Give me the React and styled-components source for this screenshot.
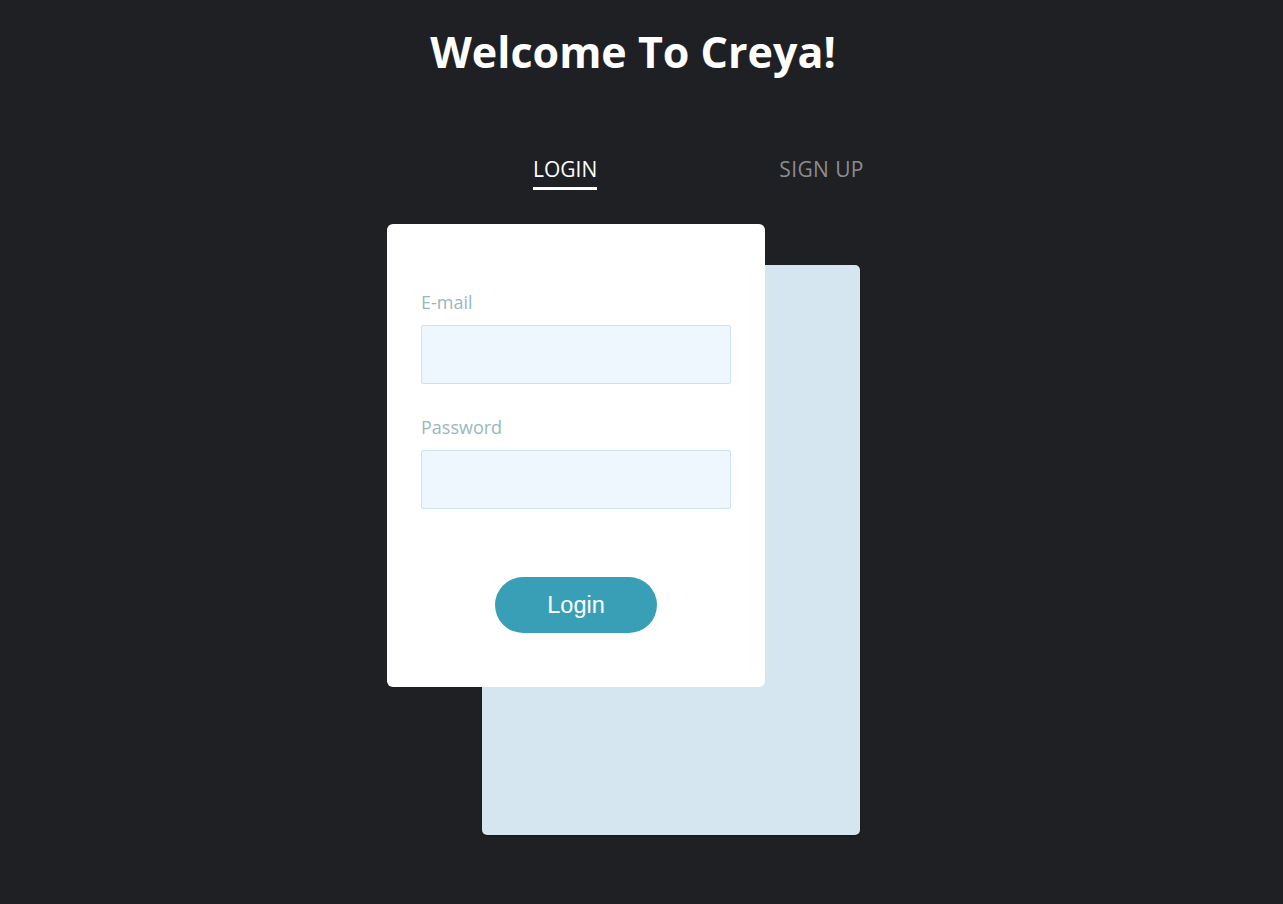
import React, { useState } from "react";
import styled, { createGlobalStyle } from "styled-components";

const GlobalStyle = createGlobalStyle`
  html, body {
    margin: 0;
    padding: 0;
    background: #1f2024;
  }
  body {
    font-family: "Open Sans", "Noto Sans", sans-serif;
  }
  * {
    box-sizing: border-box;
  }
`;

function App() {
  const [tab, setTab] = useState("login");

  return (
    <Page>
      <GlobalStyle />
      <Title>Welcome To Creya!</Title>
      <Tabs>
        <Tab active={tab === "login"} onClick={() => setTab("login")}>
          LOGIN
        </Tab>
        <Tab active={tab === "signup"} onClick={() => setTab("signup")}>
          SIGN UP
        </Tab>
      </Tabs>
      <CardStack>
        <BackCard />
        <FrontCard>
          <Field>
            <Label htmlFor="email">E-mail</Label>
            <Input id="email" type="email" />
          </Field>
          <Field>
            <Label htmlFor="password">Password</Label>
            <Input id="password" type="password" />
          </Field>
          <SubmitButton>Login</SubmitButton>
        </FrontCard>
      </CardStack>
    </Page>
  );
}
export default App;

const Page = styled.div`
  width: 1266px;
  min-height: 904px;
  display: flex;
  flex-direction: column;
  padding-top: 24px;
`;

const Title = styled.h1`
  margin: 0;
  text-align: center;
  color: #ffffff;
  font-family: "Open Sans", sans-serif;
  font-weight: 700;
  font-size: 43px;
  line-height: 56px;
`;

const Tabs = styled.div`
  display: flex;
  gap: 182px;
  margin: 75px 0 0 533px;
`;

const Tab = styled.button`
  background: none;
  border: none;
  padding: 0 0 4px;
  cursor: pointer;
  font-family: "Open Sans", sans-serif;
  font-size: 21px;
  line-height: 28px;
  letter-spacing: ${({ active }) => (active ? "0" : "0.4px")};
  color: ${({ active }) => (active ? "#ffffff" : "#8c8c8c")};
  border-bottom: 3px solid
    ${({ active }) => (active ? "#ffffff" : "transparent")};
`;

const CardStack = styled.div`
  position: relative;
  width: 473px;
  height: 611px;
  margin: 34px 0 0 387px;
`;

const BackCard = styled.div`
  position: absolute;
  left: 95px;
  top: 41px;
  width: 378px;
  height: 570px;
  background: #d5e6f0;
  border-radius: 5px;
  box-shadow: 0 1px 2px rgba(0, 0, 0, 0.35);
`;

const FrontCard = styled.form`
  position: relative;
  width: 378px;
  height: 463px;
  background: #ffffff;
  border-radius: 6px;
  padding: 66px 34px 0;
  display: flex;
  flex-direction: column;
`;

const Field = styled.div`
  display: flex;
  flex-direction: column;
  gap: 11px;
  margin-bottom: 31px;
`;

const Label = styled.label`
  color: #98b8be;
  font-family: "Open Sans", sans-serif;
  font-size: 18px;
  line-height: 24px;
`;

const Input = styled.input`
  width: 310px;
  height: 59px;
  background: #eef7fd;
  border: 1px solid #cfe0ef;
  border-radius: 2px;
  outline: none;
  padding: 0 12px;
  font-size: 16px;
`;

const SubmitButton = styled.button`
  align-self: center;
  margin-top: 37px;
  width: 162px;
  height: 56px;
  border: none;
  border-radius: 28px;
  background: #399fb6;
  color: #ffffff;
  font-family: "Liberation Sans", Arial, sans-serif;
  font-size: 23.5px;
  padding-top: 2px;
  cursor: pointer;
`;
